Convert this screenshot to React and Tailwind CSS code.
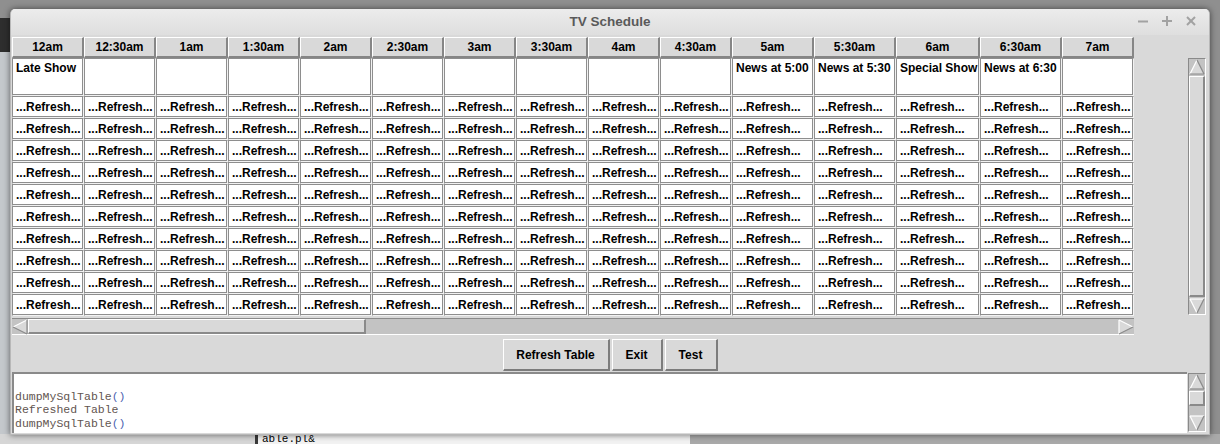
import React from "react";

const cols = [
  "12am", "12:30am", "1am", "1:30am", "2am", "2:30am", "3am", "3:30am",
  "4am", "4:30am", "5am", "5:30am", "6am", "6:30am", "7am",
];

const shows = [
  "Late Show", "", "", "", "", "", "", "", "", "",
  "News at 5:00", "News at 5:30", "Special Show", "News at 6:30", "",
];

const sans = "font-['Liberation_Sans',Arial,sans-serif]";

function Arrow({ dir }) {
  const light = "#ffffff";
  const dark = "#8a8a8a";
  let pts, lines;
  if (dir == "up") {
    pts = "8,1 1,15 15,15";
    lines = [[8, 1, 1, 15, light], [1, 15, 15, 15, dark], [15, 15, 8, 1, dark]];
  } else if (dir == "down") {
    pts = "1,1 15,1 8,15";
    lines = [[1, 1, 15, 1, light], [1, 1, 8, 15, light], [15, 1, 8, 15, dark]];
  } else if (dir == "left") {
    pts = "1,8 15,1 15,15";
    lines = [[1, 8, 15, 1, light], [15, 1, 15, 15, dark], [15, 15, 1, 8, dark]];
  } else {
    pts = "1,1 1,15 15,8";
    lines = [[1, 1, 1, 15, light], [1, 1, 15, 8, light], [1, 15, 15, 8, dark]];
  }
  return (
    <svg width="16" height="16" viewBox="0 0 16 16" className="shrink-0 block">
      <polygon points={pts} fill="#d9d9d9" />
      {lines.map((l, i) => (
        <line key={i} x1={l[0]} y1={l[1]} x2={l[2]} y2={l[3]} stroke={l[4]} strokeWidth="1.2" />
      ))}
    </svg>
  );
}

function VScroll({ className, slider }) {
  return (
    <div className={"flex flex-col w-[18px] bg-[#c3c3c3] border border-t-[#8a8a8a] border-l-[#8a8a8a] border-r-white border-b-white " + className}>
      <Arrow dir="up" />
      <div className="flex-1 flex flex-col">
        <div className={"bg-[#d9d9d9] border-t border-l border-r-2 border-b-2 border-t-white border-l-white border-r-[#8a8a8a] border-b-[#8a8a8a] " + slider}></div>
      </div>
      <Arrow dir="down" />
    </div>
  );
}

export default function App() {
  return (
    <div className={"relative w-[1220px] h-[444px] overflow-hidden bg-[#8f8f8f] " + sans}>
      {/* desktop behind the window */}
      <div className="absolute left-0 top-[18px] w-[12px] h-[34px] bg-[#2e2e2e]"></div>
      <div className="absolute left-0 top-[52px] w-[12px] h-[392px] bg-[#c4c8cc]"></div>
      <div className="absolute left-0 top-[434px] w-[255px] h-[10px] bg-[#d6d6d6]"></div>
      <div className="absolute left-[255px] top-[434px] w-[3px] h-[10px] bg-[#3a3a3a]"></div>
      <div className="absolute left-[258px] top-[434px] w-[432px] h-[10px] bg-[#f2f2f2] overflow-hidden">
        <div className="font-['Liberation_Mono',monospace] text-[11px] leading-[10px] text-black pl-[4px]">able.pl&amp;</div>
      </div>
      <div className="absolute left-[690px] top-[434px] w-[530px] h-[10px] bg-[#a9a9a9]"></div>

      {/* window */}
      <div className="absolute left-[10px] top-[9px] w-[1200px] h-[426px] flex flex-col rounded-t-[5px] overflow-hidden bg-[#d9d9d9] shadow-[0_0_6px_rgba(0,0,0,0.55)] border-x border-b border-[#b8b8b8]">
        <div className="h-[26px] shrink-0 relative flex items-center justify-center bg-gradient-to-b from-[#ececec] to-[#dedede]">
          <span className="text-[13.5px] font-bold text-[#5a5a5a]">TV Schedule</span>
          <div className="absolute right-[13px] top-[7px] flex gap-[14px]">
            <svg width="10" height="10" viewBox="0 0 10 10"><line x1="0" y1="5.5" x2="10" y2="5.5" stroke="#a2a2a2" strokeWidth="2" /></svg>
            <svg width="10" height="10" viewBox="0 0 10 10"><line x1="0" y1="5" x2="10" y2="5" stroke="#a2a2a2" strokeWidth="2" /><line x1="5" y1="0" x2="5" y2="10" stroke="#a2a2a2" strokeWidth="2" /></svg>
            <svg width="10" height="10" viewBox="0 0 10 10"><line x1="1" y1="1" x2="9" y2="9" stroke="#a2a2a2" strokeWidth="2" /><line x1="9" y1="1" x2="1" y2="9" stroke="#a2a2a2" strokeWidth="2" /></svg>
          </div>
        </div>

        <div className="flex-1 flex flex-col pt-[2px]">
          <div className="flex">
            <div className="pl-[1px] flex flex-col">
              <div className="grid grid-cols-[repeat(10,72px)_82px_82px_84px_82px_72px] text-[12px] font-bold text-black">
                {cols.map((c) => (
                  <div key={c} className="h-[21px] flex items-center justify-center bg-[#d9d9d9] border-t border-l border-r-2 border-b-2 border-t-white border-l-white border-r-[#868686] border-b-[#868686]">
                    {c}
                  </div>
                ))}
                {shows.map((s, i) => (
                  <div key={"s" + i} className="h-[38px] bg-white border border-t-[#8e8e8e] border-l-[#8e8e8e] border-r-[#f2f2f2] border-b-[#f2f2f2] shadow-[inset_-1px_-1px_0_#8e8e8e] pl-[3px] pt-[2px] leading-[15px] whitespace-nowrap overflow-hidden">
                    {s}
                  </div>
                ))}
                {Array.from({ length: 10 }).map((_, r) =>
                  cols.map((c) => (
                    <div key={r + c} className="h-[22px] bg-white border border-t-[#8e8e8e] border-l-[#8e8e8e] border-r-[#f2f2f2] border-b-[#f2f2f2] shadow-[inset_-1px_-1px_0_#8e8e8e] pl-[3px] flex items-center whitespace-nowrap overflow-hidden">
                      ...Refresh...
                    </div>
                  ))
                )}
              </div>
              <div className="mt-[2px] h-[17px] w-[1122px] flex bg-[#c3c3c3] border-t border-b border-t-[#8a8a8a] border-b-white">
                <Arrow dir="left" />
                <div className="w-[338px] bg-[#d9d9d9] border-t border-l border-r-2 border-b-2 border-t-white border-l-white border-r-[#8a8a8a] border-b-[#8a8a8a]"></div>
                <div className="flex-1"></div>
                <Arrow dir="right" />
              </div>
            </div>
            <div className="flex-1"></div>
            <VScroll className="mt-[21px] h-[257px] mr-[3px]" slider="flex-1 mt-[1px] mb-[1px]" />
          </div>

          <div className="mt-[4px] flex justify-center gap-[2px] text-[12px] font-bold text-black">
            {[["Refresh Table", "w-[107px]"], ["Exit", "w-[51px]"], ["Test", "w-[53px]"]].map(([t, w]) => (
              <div key={t} className={"h-[32px] flex items-center justify-center bg-[#d9d9d9] border-t border-l border-r-2 border-b-2 border-t-white border-l-white border-r-[#7c7c7c] border-b-[#7c7c7c] " + w}>
                {t}
              </div>
            ))}
          </div>

          <div className="mt-[1px] flex pl-[1px] pr-[3px]">
            <div className="w-[1175px] h-[61px] bg-white border-t-2 border-l-2 border-t-[#8a8a8a] border-l-[#8a8a8a] overflow-hidden pl-[1px] pt-[2px] font-['Liberation_Mono',monospace] text-[11.5px] leading-[13.5px] text-[#625550] whitespace-pre">
              <div>{" "}</div>
              <div>dumpMySqlTable<span className="text-[#4a62b0]">()</span></div>
              <div>Refreshed Table</div>
              <div>dumpMySqlTable<span className="text-[#4a62b0]">()</span></div>
            </div>
            <div className="flex-1"></div>
            <VScroll className="h-[59px] mt-[1px]" slider="h-[15px] mt-[1px]" />
          </div>
        </div>
      </div>
    </div>
  );
}
